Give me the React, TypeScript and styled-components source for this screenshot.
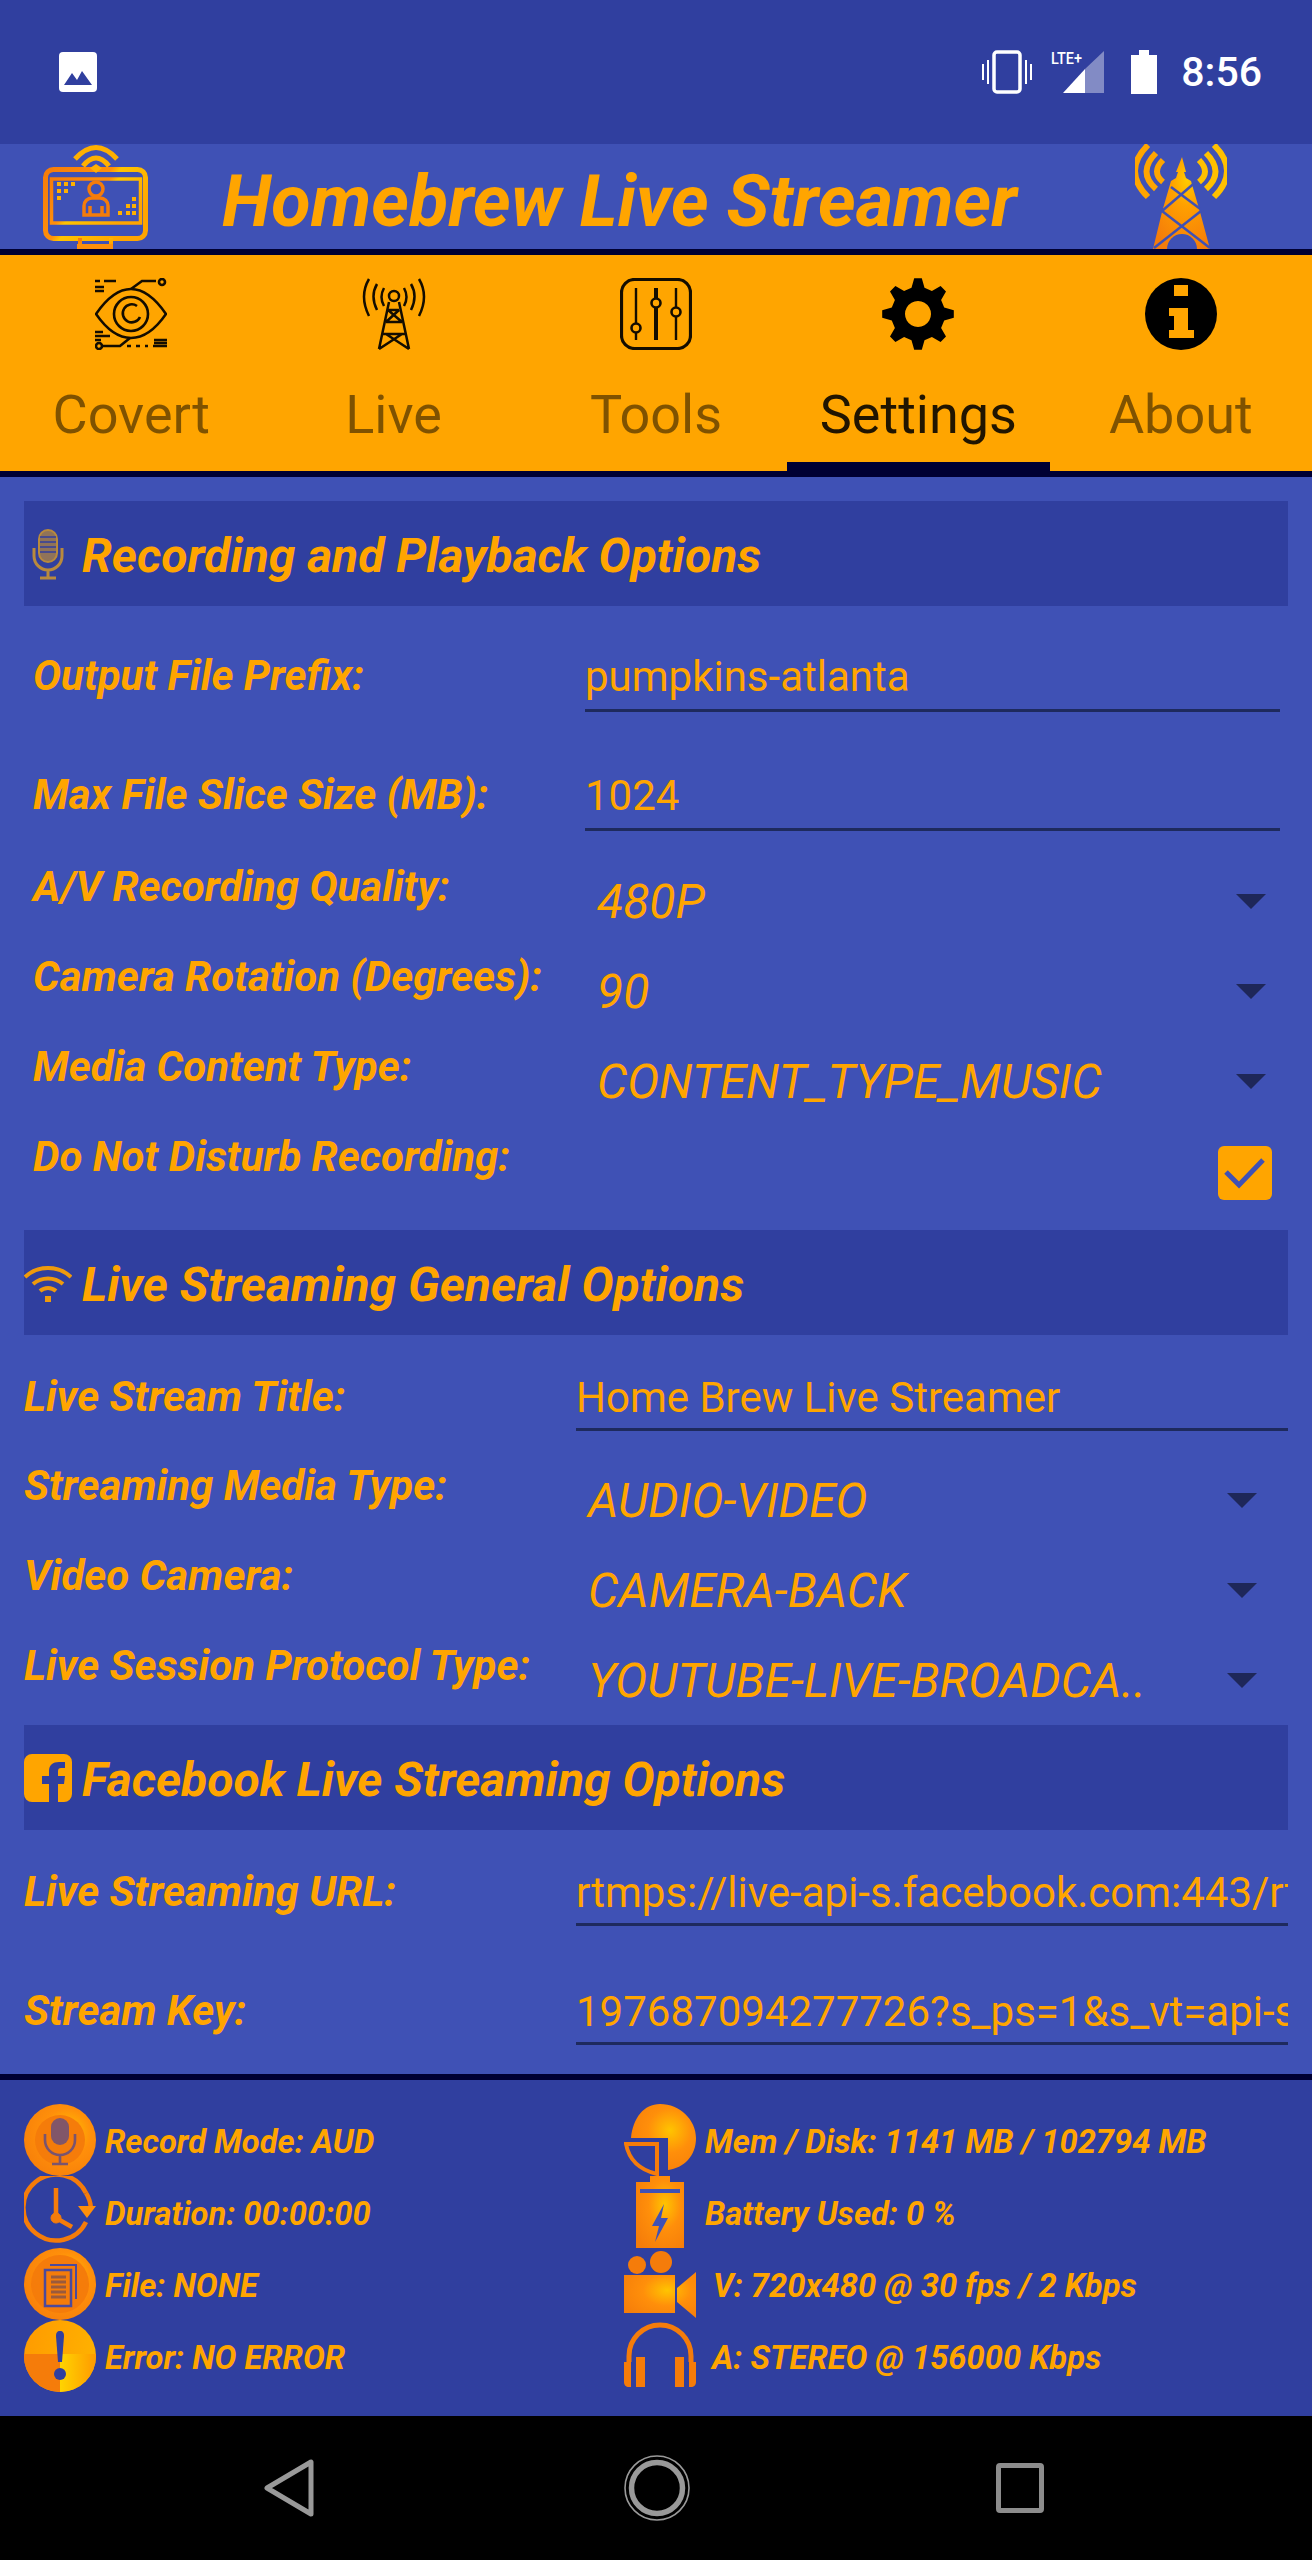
import React from "react";
import styled, { createGlobalStyle } from "styled-components";

const ORANGE = "#ffa500";
const INDIGO = "#3f51b5";
const DEEP = "#303f9f";
const NAVY = "#000033";
const LINE = "#1e2a5e";

const GlobalStyle = createGlobalStyle`
  html, body { margin: 0; padding: 0; background: ${INDIGO}; }
  * { box-sizing: border-box; }
`;

const Page = styled.div`
  width: 1312px;
  height: 2560px;
  display: flex;
  flex-direction: column;
  font-family: Roboto, "Liberation Sans", sans-serif;
  color: ${ORANGE};
  background: ${INDIGO};
  overflow: hidden;
`;

const StatusBar = styled.div`
  height: 144px;
  flex: none;
  background: ${DEEP};
  display: flex;
  align-items: center;
  padding: 0 50px 0 59px;
`;

const StatusRight = styled.div`
  margin-left: auto;
  display: flex;
  align-items: center;
`;

const SignalBox = styled.div`
  margin: 0 27px 0 15px;
  line-height: 0;
`;

const Clock = styled.span`
  color: #fff;
  font-size: 41px;
  font-weight: 500;
  margin-left: 24px;
`;

const AppBar = styled.div`
  height: 111px;
  flex: none;
  background: ${INDIGO};
  border-bottom: 6px solid ${NAVY};
  display: flex;
  align-items: flex-start;
  padding: 0 85px 0 43px;
`;

const Title = styled.div`
  margin: 18px 0 0 74px;
  font-size: 72px;
  line-height: 80px;
  font-weight: 700;
  font-style: italic;
  white-space: nowrap;
`;

const RightLogoBox = styled.div`
  margin-left: auto;
  line-height: 0;
`;

const TabBar = styled.div`
  height: 222px;
  flex: none;
  background: ${ORANGE};
  border-bottom: 6px solid ${NAVY};
  display: grid;
  grid-template-columns: repeat(5, 1fr);
`;

const Tab = styled.div<{ $active?: boolean }>`
  position: relative;
  display: flex;
  flex-direction: column;
  align-items: center;
  padding-top: 23px;
  color: ${(p) => (p.$active ? "rgba(0,0,0,0.87)" : "rgba(0,0,0,0.5)")};
  ${(p) =>
    p.$active &&
    `&::after {
      content: "";
      position: absolute;
      left: 0;
      right: 0;
      bottom: 0;
      height: 9px;
      background: ${NAVY};
    }`}
`;

const TabIcon = styled.div`
  width: 72px;
  height: 72px;
  line-height: 0;
`;

const TabLabel = styled.div`
  margin-top: 30px;
  font-size: 54px;
  line-height: 70px;
  font-weight: 400;
`;

const Content = styled.div`
  flex: none;
  height: 1603px;
  padding: 24px 24px 6px;
  border-bottom: 6px solid ${NAVY};
  background: ${INDIGO};
`;

const SectionHeader = styled.div`
  height: 105px;
  background: ${DEEP};
  display: flex;
  align-items: center;
  gap: 10px;
`;

const SectionIcon = styled.div`
  width: 48px;
  height: 48px;
  flex: none;
  line-height: 0;
  display: flex;
  align-items: center;
`;

const SectionTitle = styled.div`
  margin-top: 3px;
  font-size: 48px;
  font-weight: 700;
  font-style: italic;
  white-space: nowrap;
`;

const Group = styled.div<{ $inset?: boolean }>`
  padding: ${(p) => (p.$inset ? "10px 8px 14px 9px" : "0")};
`;

const InputRow = styled.div<{ $top: number }>`
  height: 119px;
  padding-top: ${(p) => p.$top}px;
  display: grid;
  grid-template-columns: 552px minmax(0, 1fr);
  align-items: start;
`;

const Label = styled.div`
  font-size: 42px;
  line-height: 52px;
  font-weight: 700;
  font-style: italic;
  white-space: nowrap;
`;

const InputValue = styled.div<{ $top: number }>`
  height: ${(p) => 96 - p.$top}px;
  font-size: 42px;
  line-height: 54px;
  font-weight: 400;
  white-space: nowrap;
  overflow: hidden;
  border-bottom: 3px solid ${LINE};
`;

const SelectStack = styled.div<{ $lift: number }>`
  margin-top: ${(p) => p.$lift}px;
`;

const SelectRow = styled.div`
  height: 90px;
  display: grid;
  grid-template-columns: 552px minmax(0, 1fr);
  align-items: start;
  padding-top: 5px;
`;

const SelectBox = styled.div<{ $arrowRight: number }>`
  display: flex;
  align-items: center;
  height: 72px;
  margin-top: 4px;
  padding: 0 ${(p) => p.$arrowRight}px 0 12px;
`;

const SelectValue = styled.div`
  font-size: 48px;
  font-weight: 400;
  font-style: italic;
  white-space: nowrap;
`;

const Arrow = styled.div`
  margin-left: auto;
  width: 0;
  height: 0;
  border-left: 15px solid transparent;
  border-right: 15px solid transparent;
  border-top: 15px solid #1e2759;
`;

const CheckCell = styled.div`
  display: flex;
  justify-content: flex-end;
  padding: 15px 8px 0 0;
`;

const CheckBox = styled.div`
  width: 54px;
  height: 54px;
  border-radius: 6px;
  background: ${ORANGE};
  display: flex;
  align-items: center;
  justify-content: center;
  line-height: 0;
`;

const Footer = styled.div`
  height: 336px;
  flex: none;
  background: ${DEEP};
  padding: 24px 0 0 24px;
  display: grid;
  grid-template-columns: 600px 1fr;
  grid-auto-rows: 72px;
`;

const FooterItem = styled.div`
  display: flex;
  align-items: center;
`;

const FooterIcon = styled.div`
  width: 72px;
  height: 72px;
  flex: none;
  line-height: 0;
`;

const FooterText = styled.div<{ $indent: number }>`
  margin: 4px 0 0 ${(p) => p.$indent}px;
  font-size: 32.7px;
  font-weight: 700;
  font-style: italic;
  white-space: nowrap;
`;

const NavBar = styled.div`
  flex: none;
  height: 144px;
  background: #000;
  display: grid;
  grid-template-columns: 360px 372px auto;
  justify-content: start;
  align-items: center;
  padding-left: 264px;
`;

const Grad = ({ id }: { id: string }) => (
  <defs>
    <radialGradient id={id} cx="0.6" cy="0.4" r="0.75">
      <stop offset="0" stopColor="#ffc400" />
      <stop offset="0.45" stopColor="#ff8f0a" />
      <stop offset="1" stopColor="#f57c0a" />
    </radialGradient>
  </defs>
);

const PictureIcon = () => (
  <svg width="38" height="40" viewBox="0 0 38 40">
    <path fill="#fff" d="M4 0h30a4 4 0 0 1 4 4v32a4 4 0 0 1-4 4H4a4 4 0 0 1-4-4V4a4 4 0 0 1 4-4z" />
    <path fill={DEEP} d="M5 33l8-12 5 7 5-9 10 14z" />
  </svg>
);

const VibrateIcon = () => (
  <svg width="52" height="44" viewBox="0 0 52 44" fill="none" stroke="#fff">
    <rect x="13" y="2" width="26" height="40" rx="3" strokeWidth="3.5" />
    <path d="M7 10v24M2 14v16M45 10v24M50 14v16" strokeWidth="2" />
  </svg>
);

const SignalIcon = () => (
  <svg width="56" height="46" viewBox="0 0 56 46">
    <polygon points="15,44 37,20 37,44" fill="#fff" />
    <polygon points="37,20 56,2 56,44 37,44" fill="#fff" opacity="0.4" />
    <text x="3" y="15" fontFamily="Roboto, sans-serif" fontSize="16" fontWeight="500" fill="#fff" textLength="31" lengthAdjust="spacingAndGlyphs">
      LTE+
    </text>
  </svg>
);

const BatteryIcon = () => (
  <svg width="26" height="44" viewBox="0 0 26 44">
    <path fill="#fff" d="M8 0h10v5h8v39H0V5h8z" />
  </svg>
);

const MonitorLogo = () => (
  <svg width="105" height="105" viewBox="0 0 105 105" fill="none">
    <defs>
      <linearGradient id="mon" x1="0" y1="0" x2="1" y2="0.6" gradientUnits="objectBoundingBox">
        <stop offset="0" stopColor="#f57c0a" />
        <stop offset="0.48" stopColor="#ff8f0a" />
        <stop offset="0.55" stopColor="#ffc400" />
        <stop offset="1" stopColor="#ffa500" />
      </linearGradient>
    </defs>
    <g stroke="url(#mon)">
      <rect x="2.5" y="25.5" width="100" height="69" rx="8" strokeWidth="5" />
      <rect x="8.5" y="35" width="89" height="44" strokeWidth="3.5" />
      <path d="M2 85h101" strokeWidth="6" />
      <path d="M37 94v8M68 94v8" strokeWidth="4" />
      <circle cx="53" cy="45" r="7" strokeWidth="3.5" stroke="#f57c0a" />
      <path d="M41 71V62a8 8 0 0 1 8-8h8a8 8 0 0 1 8 8v9zM47 62v9M59 62v9" strokeWidth="3.5" stroke="#f57c0a" />
    </g>
    <path d="M32 15Q53 -8 74 15M40 22Q53 6 66 22" stroke="#ffb000" strokeWidth="5" />
    <path d="M34 100h36v5H34z" fill="#ff8f0a" />
    <path d="M53 29l-6-5 6-4 6 4z" fill="#ffb000" />
    <g fill="#ffb000">
      {[
        [14, 38],
        [21, 38],
        [28, 38],
        [14, 45],
        [21, 45],
        [14, 52],
        [89, 53],
        [83, 60],
        [89, 60],
        [75, 67],
        [83, 67],
        [89, 67],
      ].map(([x, y]) => (
        <rect key={`${x}-${y}`} x={x} y={y} width="4" height="4" />
      ))}
    </g>
  </svg>
);

const TowerLogo = () => (
  <svg width="92" height="105" viewBox="0 0 92 105" fill="none">
    <defs>
      <radialGradient id="twr" cx="0.6" cy="0.25" r="0.8">
        <stop offset="0" stopColor="#ffcc00" />
        <stop offset="0.35" stopColor="#ffa000" />
        <stop offset="1" stopColor="#f57c0a" />
      </radialGradient>
    </defs>
    <path fill="url(#twr)" d="M47 13l4 15h-2l2 6 5 3 9 31 10 37H18l9-37 9-31 5-3 2-6h-2z" />
    <path stroke={INDIGO} strokeWidth="2.5" d="M27 67l36-31M68 67L36 43M19 104l47-37M75 104L27 67" />
    <path fill={INDIGO} d="M32 105a15 15 0 0 1 30 0z" />
    <path stroke="#ffa500" strokeWidth="6" d="M13 1Q-13 27 13 53M21 9Q2 28 21 45M28 16Q16 28 28 38" />
    <path stroke="#ffc000" strokeWidth="6" d="M79 1Q105 27 79 53M71 9Q90 28 71 45M64 16Q76 28 64 38" />
  </svg>
);

const EyeIcon = () => (
  <svg width="72" height="72" viewBox="0 0 72 72" fill="none" stroke="#140d00" strokeWidth="2.6">
    <path d="M1 36C12 20 24 11 36 11s24 9 35 25C60 52 48 60 36 60S12 52 1 36z" />
    <circle cx="36" cy="36" r="17" />
    <path d="M42 28a9 9 0 1 0 3 11" />
    <path d="M36 11l11-8h14M0 3h5M9 3h12M0 9h9M0 13h9" />
    <circle cx="67" cy="4" r="3" />
    <circle cx="4" cy="68" r="3" />
    <path d="M7 68h18l10-8M0 54h8M0 58h15M0 62h6M32 68h4M41 68h4M50 68h3M58 68h14M59 62h13M59 65h13" />
  </svg>
);

const AntennaIcon = () => (
  <svg width="72" height="72" viewBox="0 0 72 72" fill="none" stroke="#140d00" strokeWidth="2.5">
    <circle cx="36" cy="18" r="5" />
    <path d="M31 24L21 71M41 24l10 47M31 32h10M28 44h16M25 56h22M21 71l23-15M51 71L28 56M44 44l-14-12M28 44l13-12" />
    <path d="M26 10q-5 9 0 18M19 6q-7 12 0 26M11 1Q1 18 11 38M46 10q5 9 0 18M53 6q7 12 0 26M61 1q10 17 0 37" />
  </svg>
);

const SlidersIcon = () => (
  <svg width="72" height="72" viewBox="0 0 72 72" fill="none" stroke="#140d00">
    <rect x="1.5" y="1.5" width="69" height="69" rx="13" strokeWidth="3.2" />
    <path d="M16 10v52M56 10v52" strokeWidth="2.4" />
    <path d="M36 10v52" strokeWidth="4" />
    <g fill={ORANGE} strokeWidth="2.6">
      <circle cx="16" cy="50" r="4.5" />
      <circle cx="36" cy="25" r="4.5" />
      <circle cx="56" cy="34" r="4.5" />
    </g>
  </svg>
);

const gearPath = () => {
  const pts: string[] = [];
  const teeth = 8;
  for (let i = 0; i < teeth; i++) {
    const a = (i / teeth) * Math.PI * 2 - Math.PI / 2;
    const step = (Math.PI * 2) / teeth;
    [
      [27, -0.5],
      [36, -0.22],
      [36, 0.22],
      [27, 0.5],
    ].forEach(([r, o]) => {
      const t = a + o * step * 0.62;
      pts.push(`${(36 + r * Math.cos(t)).toFixed(1)} ${(36 + r * Math.sin(t)).toFixed(1)}`);
    });
  }
  return `M${pts.join("L")}Z M36 23a13 13 0 1 0 .01 0Z`;
};

const GearIcon = () => (
  <svg width="72" height="72" viewBox="0 0 72 72">
    <path fill="#000" fillRule="evenodd" d={gearPath()} />
  </svg>
);

const InfoIcon = () => (
  <svg width="72" height="72" viewBox="0 0 72 72">
    <circle cx="36" cy="36" r="36" fill="#000" />
    <path fill={ORANGE} d="M29 7h14v11H29zM24 30h19v22h6v8H24v-8h5V38h-5z" />
  </svg>
);

const MicSmall = () => (
  <svg width="48" height="52" viewBox="0 0 48 52" fill="none" stroke="#b98a3c">
    <rect x="15" y="2" width="18" height="32" rx="9" fill="#b98a3c" fillOpacity="0.7" strokeWidth="2" />
    <path d="M16 9h16M16 14h16M16 19h16M16 24h16" strokeWidth="1.6" stroke={DEEP} />
    <path d="M10 20v8a14 14 0 0 0 28 0v-8M24 42v8M16 50h16" strokeWidth="3" />
  </svg>
);

const WifiIcon = () => (
  <svg width="48" height="40" viewBox="0 0 48 40" fill="none" stroke="#ef9a0c" strokeWidth="4">
    <path d="M1 14a34 34 0 0 1 46 0M9 21a23 23 0 0 1 30 0M16 28a12 12 0 0 1 16 0" />
    <rect x="21" y="33" width="6" height="6" fill="#ef9a0c" stroke="none" />
  </svg>
);

const FacebookIcon = () => (
  <svg width="48" height="48" viewBox="0 0 48 48">
    <path
      fill={ORANGE}
      d="M8 0h32a8 8 0 0 1 8 8v32a8 8 0 0 1-8 8h-6V30h6l1-8h-7v-5c0-2 1-3 3-3h4V8h-6c-6 0-10 3-10 9v5h-7v8h7v18H8a8 8 0 0 1-8-8V8a8 8 0 0 1 8-8z"
    />
  </svg>
);

const CheckMark = () => (
  <svg width="42" height="34" viewBox="0 0 42 34" fill="none" stroke={INDIGO} strokeWidth="5">
    <path d="M2 16l13 13L39 4" />
  </svg>
);

const MicDisc = () => (
  <svg width="72" height="72" viewBox="0 0 72 72" fill="none">
    <Grad id="fa" />
    <circle cx="36" cy="36" r="36" fill="url(#fa)" />
    <circle cx="36" cy="36" r="25" fill="#f57c0a" />
    <rect x="27" y="14" width="18" height="27" rx="9" fill="#5a4a8a" fillOpacity="0.75" />
    <path d="M21 30v6a15 15 0 0 0 30 0v-6M36 51v8M28 60h16" stroke="#5a4a8a" strokeOpacity="0.8" strokeWidth="2.6" />
  </svg>
);

const ClockIcon = () => (
  <svg width="72" height="72" viewBox="0 0 72 72" fill="none" stroke="#f57c0a">
    <path d="M62 46A33 33 0 1 1 62 17" strokeWidth="4.5" />
    <path d="M62 17q4 6 5 15" strokeWidth="4.5" />
    <path d="M54 30h18l-9 12z" fill="#ff8f0a" stroke="none" />
    <path d="M32 12v30l16 9" strokeWidth="4.5" />
    <circle cx="32" cy="42" r="5" fill="#f57c0a" />
  </svg>
);

const FileDisc = () => (
  <svg width="72" height="72" viewBox="0 0 72 72" fill="none">
    <Grad id="fb" />
    <circle cx="36" cy="36" r="36" fill="url(#fb)" />
    <circle cx="36" cy="36" r="29" fill="#f57c0a" />
    <path d="M21 22h26v36H21z" stroke="#4b4a9c" strokeWidth="2.5" />
    <path d="M26 17h26v34" stroke="#4b4a9c" strokeWidth="2" />
    <path d="M27 29h15M27 34h15M27 39h15M27 44h15M27 49h15" stroke="#9a5a3c" strokeWidth="3" />
  </svg>
);

const ErrorDisc = () => (
  <svg width="72" height="72" viewBox="0 0 72 72">
    <defs>
      <linearGradient id="fc" x1="0" y1="0" x2="1" y2="0.2">
        <stop offset="0" stopColor="#ff9a00" />
        <stop offset="1" stopColor="#ffb000" />
      </linearGradient>
      <linearGradient id="fg" x1="0" y1="0" x2="1" y2="0">
        <stop offset="0" stopColor="#ffd400" />
        <stop offset="1" stopColor="#ff9a00" />
      </linearGradient>
    </defs>
    <circle cx="36" cy="36" r="36" fill="url(#fc)" />
    <path d="M36 34H0A36 36 0 0 0 36 72z" fill="#f57c0a" />
    <path d="M36 34V72A36 36 0 0 0 72 36V34z" fill="url(#fg)" />
    <path d="M36 11c3 0 4 2 4 5l-2 26h-4l-2-26c0-3 1-5 4-5z" fill={DEEP} />
    <circle cx="36" cy="54" r="6" fill={DEEP} />
  </svg>
);

const MemoryIcon = () => (
  <svg width="72" height="72" viewBox="0 0 72 72" fill="none">
    <Grad id="fd" />
    <path d="M7 34C9 14 20 0 36 0c20 0 36 16 36 34 0 18-12 30-28 32V34z" fill="url(#fd)" />
    <path d="M2 40h31v30C16 66 5 56 2 40z" stroke="#f57c0a" strokeWidth="4" />
  </svg>
);

const BatteryFooterIcon = () => (
  <svg width="72" height="72" viewBox="0 0 72 72">
    <Grad id="fe" />
    <path fill="url(#fe)" d="M26 0h20v6h14v66H12V6h14z" />
    <path fill={INDIGO} d="M16 13h40v4H16z" />
    <path fill={INDIGO} d="M40 28L28 50h7l-4 16 13-24h-7z" />
  </svg>
);

const CameraIcon = () => (
  <svg width="72" height="72" viewBox="0 0 72 72">
    <Grad id="ff" />
    <circle cx="13" cy="17" r="9" fill="#f57c0a" />
    <circle cx="37" cy="14" r="11" fill="#f57c0a" />
    <path fill="url(#ff)" d="M0 27h51v38H0zM53 40l19-16v46L53 54z" />
  </svg>
);

const HeadphoneIcon = () => (
  <svg width="72" height="72" viewBox="0 0 72 72" fill="none">
    <path d="M5 42V36a31 31 0 0 1 62 0v6" stroke="#f57c0a" strokeWidth="5" />
    <path
      fill="#f57c0a"
      d="M0 42h7v25H5c-3 0-5-2-5-5zM12 37h9v30h-9zM72 42h-7v25h2c3 0 5-2 5-5zM60 37h-9v30h9z"
    />
  </svg>
);

const BackIcon = () => (
  <svg width="50" height="58" viewBox="0 0 50 58" fill="none" stroke="#999" strokeWidth="5" strokeLinejoin="round">
    <path d="M47 3v52L3 29z" />
  </svg>
);

const HomeIcon = () => (
  <svg width="66" height="66" viewBox="0 0 66 66" fill="none" stroke="#999">
    <circle cx="33" cy="33" r="32" strokeWidth="1.6" />
    <circle cx="33" cy="33" r="25.5" strokeWidth="5.5" />
  </svg>
);

const RecentIcon = () => (
  <svg width="48" height="50" viewBox="0 0 48 50" fill="none" stroke="#8c8c8c" strokeWidth="5">
    <rect x="2.5" y="2.5" width="43" height="45" rx="1.5" />
  </svg>
);

const tabs = [
  { label: "Covert", icon: <EyeIcon /> },
  { label: "Live", icon: <AntennaIcon /> },
  { label: "Tools", icon: <SlidersIcon /> },
  { label: "Settings", icon: <GearIcon />, active: true },
  { label: "About", icon: <InfoIcon /> },
];

const footerItems = [
  { icon: <MicDisc />, text: "Record Mode: AUD", indent: 9 },
  { icon: <MemoryIcon />, text: "Mem / Disk: 1141 MB / 102794 MB", indent: 9 },
  { icon: <ClockIcon />, text: "Duration: 00:00:00", indent: 9 },
  { icon: <BatteryFooterIcon />, text: "Battery Used: 0 %", indent: 9 },
  { icon: <FileDisc />, text: "File: NONE", indent: 9 },
  { icon: <CameraIcon />, text: "V: 720x480 @ 30 fps / 2 Kbps", indent: 17 },
  { icon: <ErrorDisc />, text: "Error: NO ERROR", indent: 9 },
  { icon: <HeadphoneIcon />, text: "A: STEREO @ 156000 Kbps", indent: 16 },
];

const Input = ({ label, value, top }: { label: string; value: string; top: number }) => (
  <InputRow $top={top}>
    <Label>{label}</Label>
    <InputValue $top={top}>{value}</InputValue>
  </InputRow>
);

const Select = ({ label, value, arrowRight }: { label: string; value: string; arrowRight: number }) => (
  <SelectRow>
    <Label>{label}</Label>
    <SelectBox $arrowRight={arrowRight}>
      <SelectValue>{value}</SelectValue>
      <Arrow />
    </SelectBox>
  </SelectRow>
);

export default function App() {
  return (
    <Page>
      <GlobalStyle />
      <StatusBar>
        <PictureIcon />
        <StatusRight>
          <VibrateIcon />
          <SignalBox>
            <SignalIcon />
          </SignalBox>
          <BatteryIcon />
          <Clock>8:56</Clock>
        </StatusRight>
      </StatusBar>
      <AppBar>
        <MonitorLogo />
        <Title>Homebrew Live Streamer</Title>
        <RightLogoBox>
          <TowerLogo />
        </RightLogoBox>
      </AppBar>
      <TabBar>
        {tabs.map((t) => (
          <Tab key={t.label} $active={t.active}>
            <TabIcon>{t.icon}</TabIcon>
            <TabLabel>{t.label}</TabLabel>
          </Tab>
        ))}
      </TabBar>
      <Content>
        <SectionHeader>
          <SectionIcon>
            <MicSmall />
          </SectionIcon>
          <SectionTitle>Recording and Playback Options</SectionTitle>
        </SectionHeader>
        <Group $inset>
          <Input top={34} label="Output File Prefix:" value="pumpkins-atlanta" />
          <Input top={34} label="Max File Slice Size (MB):" value="1024" />
          <SelectStack $lift={2}>
            <Select label="A/V Recording Quality:" value="480P" arrowRight={14} />
            <Select label="Camera Rotation (Degrees):" value="90" arrowRight={14} />
            <Select label="Media Content Type:" value="CONTENT_TYPE_MUSIC" arrowRight={14} />
            <SelectRow>
              <Label>Do Not Disturb Recording:</Label>
              <CheckCell>
                <CheckBox>
                  <CheckMark />
                </CheckBox>
              </CheckCell>
            </SelectRow>
          </SelectStack>
        </Group>
        <SectionHeader>
          <SectionIcon>
            <WifiIcon />
          </SectionIcon>
          <SectionTitle>Live Streaming General Options</SectionTitle>
        </SectionHeader>
        <Group>
          <Input top={36} label="Live Stream Title:" value="Home Brew Live Streamer" />
          <SelectStack $lift={1}>
            <Select label="Streaming Media Type:" value="AUDIO-VIDEO" arrowRight={31} />
            <Select label="Video Camera:" value="CAMERA-BACK" arrowRight={31} />
            <Select label="Live Session Protocol Type:" value="YOUTUBE-LIVE-BROADCA.." arrowRight={31} />
          </SelectStack>
        </Group>
        <SectionHeader>
          <SectionIcon>
            <FacebookIcon />
          </SectionIcon>
          <SectionTitle>Facebook Live Streaming Options</SectionTitle>
        </SectionHeader>
        <Group>
          <Input top={36} label="Live Streaming URL:" value="rtmps://live-api-s.facebook.com:443/rtmp/" />
          <Input top={36} label="Stream Key:" value="197687094277726?s_ps=1&s_vt=api-s&a=Abw" />
        </Group>
      </Content>
      <Footer>
        {footerItems.map((f) => (
          <FooterItem key={f.text}>
            <FooterIcon>{f.icon}</FooterIcon>
            <FooterText $indent={f.indent}>{f.text}</FooterText>
          </FooterItem>
        ))}
      </Footer>
      <NavBar>
        <BackIcon />
        <HomeIcon />
        <RecentIcon />
      </NavBar>
    </Page>
  );
}
